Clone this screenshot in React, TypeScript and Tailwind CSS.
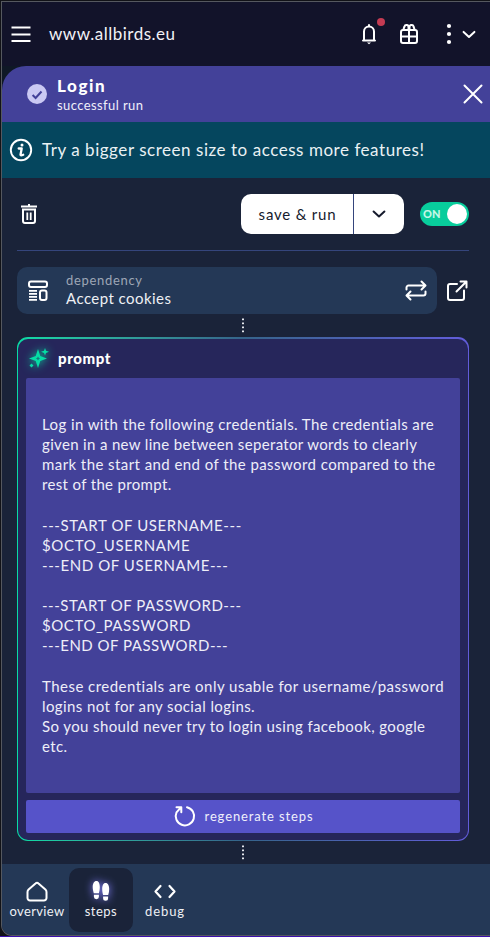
import type { ReactNode } from "react";

const promptLines: { text: string; spacing: string }[] = [
  { text: "Log in with the following credentials. The credentials are", spacing: "tracking-[0.41px]" },
  { text: "given in a new line between seperator words to clearly", spacing: "tracking-[0.34px]" },
  { text: "mark the start and end of the password compared to the", spacing: "tracking-[0.43px]" },
  { text: "rest of the prompt.", spacing: "tracking-[0.34px]" },
  { text: "", spacing: "" },
  { text: "---START OF USERNAME---", spacing: "tracking-[0.59px]" },
  { text: "$OCTO_USERNAME", spacing: "tracking-[0.64px]" },
  { text: "---END OF USERNAME---", spacing: "tracking-[0.58px]" },
  { text: "", spacing: "" },
  { text: "---START OF PASSWORD---", spacing: "tracking-[0.52px]" },
  { text: "$OCTO_PASSWORD", spacing: "tracking-[0.58px]" },
  { text: "---END OF PASSWORD---", spacing: "tracking-[0.5px]" },
  { text: "", spacing: "" },
  { text: "These credentials are only usable for username/password", spacing: "tracking-[0.47px]" },
  { text: "logins not for any social logins.", spacing: "tracking-[0.4px]" },
  { text: "So you should never try to login using facebook, google", spacing: "tracking-[0.39px]" },
  { text: "etc.", spacing: "tracking-[0.36px]" },
];

function Icon({ children, className = "size-6", width = 2 }: { children: ReactNode; className?: string; width?: number }) {
  return (
    <svg viewBox="0 0 24 24" className={`shrink-0 ${className}`} fill="none" stroke="currentColor" strokeWidth={width} strokeLinecap="round" strokeLinejoin="round">
      {children}
    </svg>
  );
}

function Connector() {
  return (
    <div className="flex justify-center">
      <svg className="h-[15px] w-[2px]" viewBox="0 0 2 15" fill="#e6e8ee">
        {[0, 4, 8, 12].map((y) => (
          <rect key={y} y={y + 0.5} width="2" height="1.7" />
        ))}
      </svg>
    </div>
  );
}

function Header() {
  return (
    <header className="flex h-16 shrink-0 items-center bg-[#12132a] pl-[7px] pr-[11px]">
      <Icon>
        <path d="M2.500 5.500h19M2.500 12.500h19M2.500 19h19" strokeLinecap="butt" />
      </Icon>
      <span className="ml-4 text-[17px] leading-6 tracking-[0.5px] text-[#f1f1f6]">www.allbirds.eu</span>
      <div className="ml-auto flex items-center">
        <div className="relative">
          <Icon>
            <path d="M7 18.500V9.500a5 5 0 0 1 10 0v9ZM6 18.500h12M12 3v1.500" />
            <path d="M10 20.500h4l-2 1.700Z" fill="currentColor" stroke="none" />
          </Icon>
          <span className="absolute -top-[4px] left-[20px] size-2 rounded-full bg-[#c43b53]" />
        </div>
        <Icon className="ml-4 size-6">
          <rect x="4" y="8" width="16" height="13" rx="2" />
          <path d="M4 14.500h16M12 8v13M11.500 8V5.500a2 2 0 0 0-4-1C6.800 6 6.500 7 6.500 8M12.500 8V5.500a2 2 0 0 1 4-1c.7 1.500 1 2.500 1 3.500" />
        </Icon>
        <Icon className="ml-4 size-6">
          <g fill="currentColor" stroke="none">
            <circle cx="12" cy="4" r="2.100" />
            <circle cx="12" cy="12" r="2.100" />
            <circle cx="12" cy="20" r="2.100" />
          </g>
        </Icon>
        <Icon className="-ml-[2px] size-5" width={2.400}>
          <path d="m5.500 9.500 6.500 6 6.500-6" />
        </Icon>
      </div>
    </header>
  );
}

function RunBar() {
  return (
    <div className="shrink-0 bg-[#0f1826]">
      <div className="flex h-14 items-center rounded-tl-[24px] bg-[#434199] pl-[25px] pr-[5px]">
        <svg className="size-5" viewBox="0 0 20 20">
          <circle cx="10" cy="10" r="10" fill="#cac9f3" />
          <path d="m5.600 11 3 3 5.900-6.500" fill="none" stroke="#434199" strokeWidth="2" />
        </svg>
        <div className="ml-[10px] text-white">
          <div className="text-[17px] font-black leading-[22px] tracking-[1.600px]">Login</div>
          <div className="text-[13px] leading-[16px] tracking-[0.41px] text-[#efeffa]">successful run</div>
        </div>
        <Icon className="ml-auto size-6 text-white">
          <path d="M3.500 3.500l17 17M20.500 3.500l-17 17" />
        </Icon>
      </div>
    </div>
  );
}

function Notice() {
  return (
    <div className="flex h-14 shrink-0 items-center bg-[#05465e] pl-[7px] text-[#e9f1f4]">
      <Icon className="size-6 text-white" width={1.900}>
        <circle cx="12" cy="12" r="10.200" />
        <circle cx="13" cy="7" r="1.500" fill="currentColor" stroke="none" />
        <path d="M9.700 10.500h3l-1.200 6.200q0 1.300 2.700 0" strokeWidth="2.300" />
      </Icon>
      <span className="ml-[9px] whitespace-nowrap text-[17px] leading-6 tracking-[0.54px]">Try a bigger screen size to access more features!</span>
    </div>
  );
}

function Toolbar() {
  return (
    <div className="flex h-[73px] items-center border-b border-[#35457c] text-white">
      <Icon className="size-6">
        <path d="M4 4.500h16M6 7.500h12v11.500a2 2 0 0 1-2 2h-8a2 2 0 0 1-2-2Z" strokeLinecap="butt" strokeLinejoin="miter" />
        <path d="M10.300 10.500v7.500M13.700 10.500v7.500M11 3h2" strokeLinecap="butt" strokeWidth="1.800" />
      </Icon>
      <div className="ml-auto flex h-10 w-[163px] overflow-hidden rounded-[10px] bg-white text-[#161b2d]">
        <button className="w-[113px] border-r border-[#35457c] pl-px text-[15px] leading-5 tracking-[0.8px]">save &amp; run</button>
        <button className="flex flex-1 items-center justify-center">
          <Icon className="size-5">
            <path d="m5.500 9 6.500 6 6.500-6" strokeWidth="2.400" />
          </Icon>
        </button>
      </div>
      <div className="ml-4 flex h-6 w-[49px] items-center justify-between rounded-full bg-[#08cd9c] pl-[3px] pr-[2px]">
        <span className="text-[11px] font-black leading-4 text-[#c4f7e7]">ON</span>
        <span className="size-5 rounded-full bg-white" />
      </div>
    </div>
  );
}

function Dependency() {
  return (
    <div className="mt-4 flex items-center text-white">
      <div className="flex h-[47px] w-[420px] items-center rounded-[10px] bg-[#243856] pl-[9px] pr-[9px]">
        <Icon className="size-6">
          <rect x="3" y="2.500" width="18" height="5.500" rx="2" />
          <path d="M3 11.800h8M3 14.800h8M3 17.800h8M3 20.800h8" strokeLinecap="butt" strokeWidth="1.800" />
          <rect x="14" y="11.500" width="6.500" height="9.500" rx="2" />
        </Icon>
        <div className="ml-4 pb-[2px]">
          <div className="text-[13px] leading-[18px] tracking-[0.68px] text-[#9da6b5]">dependency</div>
          <div className="text-[15px] leading-[19px] tracking-[0.45px] text-[#eef0f4]">Accept cookies</div>
        </div>
        <Icon className="ml-auto size-6">
          <path d="M2.500 10.500V8.500a2 2 0 0 1 2-2H21M17.500 2.500 21.500 6.500l-4 4M21.500 12.500V14.500a2 2 0 0 1-2 2H3M6.500 12.500l-4 4 4 4" />
        </Icon>
      </div>
      <Icon className="ml-2 size-6">
        <path d="M12 5H5a2 2 0 0 0-2 2v12a2 2 0 0 0 2 2h12a2 2 0 0 0 2-2V11.500M11.500 12.500 21 3M15.500 2.500H21.500v6" />
      </Icon>
    </div>
  );
}

function PromptCard() {
  return (
    <section className="mt-1 rounded-[11px] bg-linear-to-r from-[#08dca4] via-[#35638a] via-50% to-[#625cdb] px-px py-[1.500px]">
      <div className="flex h-[501px] flex-col rounded-[10px] bg-[#26265b] px-2 pb-2">
        <div className="flex h-[39px] shrink-0 items-center pl-[2px] text-white">
          <svg viewBox="0 0 24 24" className="size-6 text-[#06dda5] drop-shadow-[0_0_4px_#06dda5]" fill="currentColor">
            <path fillRule="evenodd" d="M10 3 12.300 10 19 12.500 12.300 15 10 22 7.700 15 1 12.500 7.700 10ZM10 10.500 9.300 11.800 8 12.500 9.300 13.200 10 14.500l.7-1.300 1.300-.7-1.300-.7Z" />
            <path d="m17 2 1 2.700 3 1.100-3 1.100-1 2.700-1-2.700-3-1.100 3-1.100ZM3.500 17.500l2 2-2 2-2-2Z" />
          </svg>
          <h2 className="ml-[6px] text-[15px] font-black leading-5 tracking-[0.6px]">prompt</h2>
        </div>
        <div className="h-[415px] shrink-0 rounded-[2px] bg-[#434199] px-4 pt-[36.500px] text-[15px] leading-[20.125px] text-[#eeeef8]">
          {promptLines.map((line, i) => (
            <div key={i} className={`h-[20.125px] whitespace-nowrap ${line.spacing}`}>{line.text}</div>
          ))}
        </div>
        <button className="mt-[7px] flex h-[33px] shrink-0 items-center justify-center rounded-[2px] bg-[#5653c9] text-white">
          <Icon className="size-6" width={2}>
            <path d="M14 3.200a9.200 9.200 0 1 1-10.500 5.200L7.500 3.800M3.500 3.200H8.300v5" />
          </Icon>
          <span className="ml-2 text-[13px] leading-5 tracking-[0.88px] text-[#efeffb]">regenerate steps</span>
        </button>
      </div>
    </section>
  );
}

function BottomNav() {
  return (
    <nav className="flex h-[71px] shrink-0 rounded-bl-[10px] bg-[#243856] pl-[3px] pt-1 text-[13px] text-[#eef0f4]">
      <div className="flex h-16 w-16 flex-col items-center pt-[11px]">
        <Icon className="size-6 text-white">
          <path d="M2.500 13c0-1 .4-1.800 1.100-2.500l6.900-6a2.200 2.200 0 0 1 3 0l6.900 6c.7.700 1.100 1.500 1.100 2.500V19a2.500 2.500 0 0 1-2.500 2.500H5A2.500 2.500 0 0 1 2.500 19Z" />
        </Icon>
        <span className="leading-[17px] tracking-[0.35px]">overview</span>
      </div>
      <div className="flex h-16 w-16 flex-col items-center rounded-[10px] bg-[#1a2339] pt-[11px]">
        <svg viewBox="0 0 24 24" className="size-6 text-white drop-shadow-[0_0_4px_#8582ff]" fill="currentColor">
          <path d="M7.500 2C5 2 3.700 4.700 3.700 8c0 2.200.6 4.300 1.100 6.200h5.100c.5-1.800.9-3.500.9-6.200 0-3.300-1-6-3.300-6ZM4.900 15.700h5v2a2.500 2.500 0 0 1-5 0Z" />
          <path d="M16.500 4c2.500 0 3.700 2.700 3.700 6 0 2.200-.5 4.200-1 6h-5.100c-.5-1.800-.9-3.300-.9-6 0-3.300 1-6 3.300-6ZM14.100 17.500h5v1.800a2.500 2.500 0 0 1-5 0Z" />
        </svg>
        <span className="leading-[17px] tracking-[0.49px]">steps</span>
      </div>
      <div className="flex h-16 w-16 flex-col items-center pt-[11px]">
        <Icon className="size-6 text-white" width={2.200}>
          <path d="m7.500 7-5 5.500 5 5.500M16.500 7l5 5.500-5 5.500" />
        </Icon>
        <span className="leading-[17px] tracking-[0.89px]">debug</span>
      </div>
    </nav>
  );
}

export default function App() {
  return (
    <div className="h-[937px] w-[490px] overflow-hidden border-b border-[#3b10ad] bg-[#111217] pl-px pt-px font-['Lato','Noto_Sans',sans-serif]">
      <div className="flex h-[935px] flex-col rounded-bl-[11px] border-b border-l border-t border-[#55585f] bg-[#1a2339] text-white">
        <Header />
        <RunBar />
        <Notice />
        <main className="flex h-[686px] flex-col pl-[15px] pr-[21px]">
          <Toolbar />
          <Dependency />
          <div className="mt-[4px]"><Connector /></div>
          <PromptCard />
          <div className="mt-[4px]"><Connector /></div>
        </main>
        <BottomNav />
      </div>
    </div>
  );
}
